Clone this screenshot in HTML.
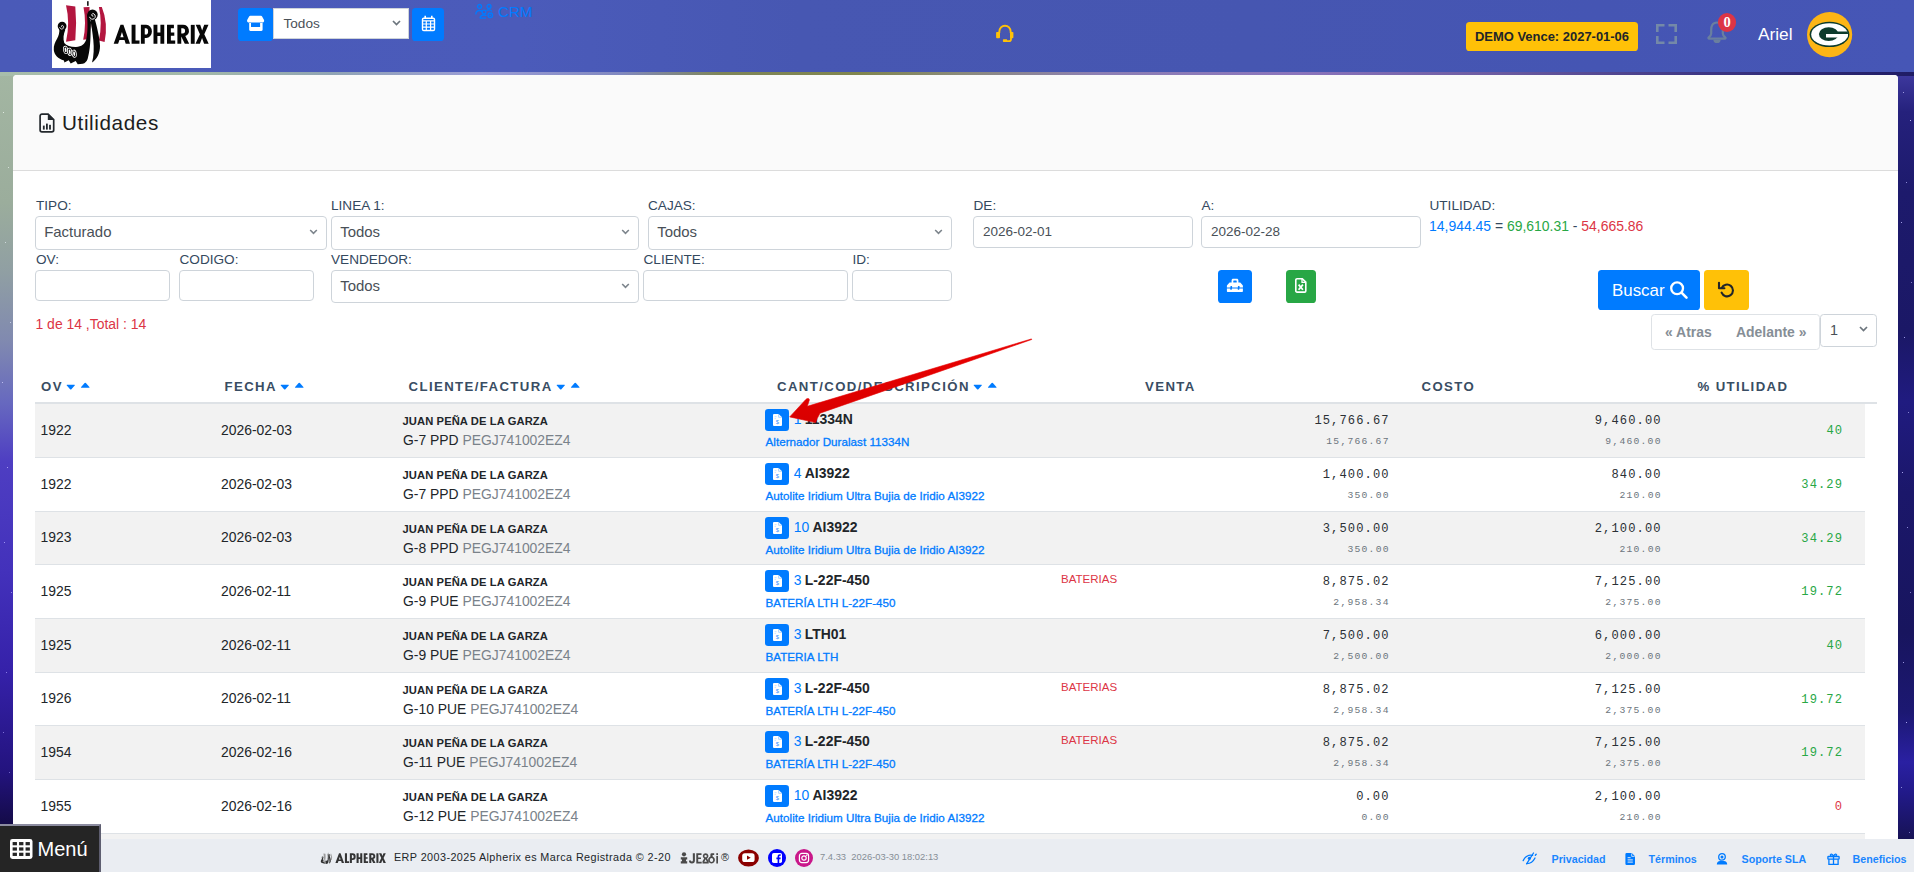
<!DOCTYPE html>
<html lang="es">
<head>
<meta charset="utf-8">
<title>Utilidades</title>
<style>
*{box-sizing:border-box;margin:0;padding:0}
html,body{width:1914px;height:872px;overflow:hidden}
body{font-family:"Liberation Sans",sans-serif;font-size:14.4px;color:#212529;position:relative;
 background:#1a1560;}
.abs{position:absolute}
/* background strips */
#bgL{left:0;top:72px;width:14px;height:800px;background:linear-gradient(180deg,#a3b6a2 0px,#9bad9c 130px,#909fa3 200px,#8089b0 270px,#6769bf 330px,#4e3ec2 390px,#4331bb 500px,#3521a9 600px,#23137e 700px,#140b48 752px)}
#bgR{left:1897px;top:72px;width:17px;height:800px;background:linear-gradient(180deg,#3f3aa0 0px,#25217c 40px,#1d1a6c 120px,#1b1866 260px,#201b80 330px,#1b176a 420px,#18155e 560px,#1c1872 640px,#2a20a2 690px,#221a8a 720px,#161252 770px)}
#bgT{left:0;top:72px;width:1914px;height:4px;background:linear-gradient(90deg,#a8bdab 0,#a2b8a8 200px,#90a4b4 330px,#9a9cd6 480px,#8088c0 620px,#7e8558 720px,#80854e 860px,#8a8a7a 960px,#8c7fb4 1100px,#8a74bc 1300px,#6a5aa0 1500px,#3d3684 1700px,#1f1c64 1914px)}
/* header */
#hdr{left:0;top:0;width:1914px;height:72px;background:linear-gradient(90deg,#4a5ab8 0,#4b5bba 520px,#4757b2 800px,#4656b1 1250px,#4555b3 1600px,#4656b6 1914px)}
#logo{left:52px;top:0;width:159px;height:68px;background:#fff}
.btnb{background:#007bff;border-radius:3.6px;color:#fff}

/* header items */
#stbtn{left:238px;top:8px;width:35px;height:33px;border-radius:3.6px}
#hsel{left:273px;top:8px;width:136px;height:31px;background:#fff;border:1px solid #ced4da;color:#495057;font-size:13.6px;line-height:29px;padding-left:9.5px}
#calbtn{left:412px;top:8px;width:32px;height:33px}
#crm{left:475px;top:1.5px;height:20px;color:#007bff;font-size:15.1px;line-height:20px;white-space:nowrap}
#demo{left:1466px;top:22px;width:172px;height:29px;background:#ffc107;border-radius:3.6px;color:#212529;font-weight:bold;font-size:12.96px;line-height:29px;text-align:center;white-space:nowrap}
#ariel{left:1758px;top:24px;color:#fff;font-size:17.28px;line-height:20px}
#nbadge{left:1718px;top:12.500px;width:18px;height:19px;border-radius:9.500px;background:#dc3545;color:#fff;font-family:"Liberation Serif",serif;font-weight:bold;font-size:14.500px;line-height:19px;text-align:center}
svg{display:block;overflow:visible}

/* title */
#ttl{left:49px;top:35px;font-size:20.7px;line-height:26px;letter-spacing:.6px;color:#1d1d1d;white-space:nowrap}
/* filters: coordinates relative to card (card left=13, top=75) */
.lbl{position:absolute;font-size:13.6px;line-height:16px;color:#34495e;white-space:nowrap}
.fc{position:absolute;background:#fff;border:1px solid #ced4da;border-radius:4px;color:#495057;font-size:14.95px;white-space:nowrap}
.fc.sel{padding-left:8.2px}
.fc.inp{padding-left:9px;font-size:13.5px}
.chev{position:absolute;right:8px;top:11.5px}
.ib{position:absolute;border-radius:3.6px}
#cnt{left:22.5px;top:241px;font-size:13.95px;line-height:16px;color:#dc3545;white-space:nowrap}
#util{left:1416px;top:142px;font-size:13.95px;line-height:18px;white-space:nowrap;color:#34495e}
#pag{left:1638px;top:239px;width:169px;height:36px;border:1px solid #dee2e6;border-radius:3.6px;background:#fff;font-weight:bold;font-size:13.95px;color:#868e96;line-height:34px;white-space:nowrap}
#psel{left:1807px;top:239px;width:57px;height:33px;border:1px solid #ced4da;border-radius:3.6px;background:#fff;color:#495057;font-size:14.4px;line-height:31px;padding-left:9px}

/* table */
#thead{left:22px;top:296px;width:1842px;height:33px;border-bottom:2px solid #dee2e6}
.th{position:absolute;top:7.5px;font-weight:bold;font-size:13.2px;line-height:16px;letter-spacing:1.4px;color:#394d63;white-space:nowrap}
.car{display:inline-block;vertical-align:top;margin-left:3.5px}
.tr{position:absolute;left:22px;width:1830px;border-bottom:1px solid #dee2e6;background:#fff}
.tr.o{background:#f2f2f2}
.tr>*{position:absolute;white-space:nowrap}
.c1,.c2{font-size:13.9px;line-height:18px;color:#212529}
.c1{left:5.5px}.c2{left:186px}
.nm{left:367.5px;top:10px;font-weight:bold;font-size:11.2px;line-height:14px;color:#212529;letter-spacing:.1px}
.fa{left:368px;top:27px;font-size:13.9px;line-height:18px;color:#212529}
.fa i{font-style:normal;color:#7a828a}
.bt{left:730px;top:5px;width:24px;height:22px;background:#007bff;border-radius:3.2px}
.q{left:758.7px;top:6px;word-spacing:-.6px;font-size:13.95px;line-height:18px;color:#007bff}
.q b{color:#212529}
.ds{left:730.5px;top:31px;font-size:11.65px;line-height:14px;color:#007bff;-webkit-text-stroke:.3px #007bff;letter-spacing:.02px}
.ct{left:1026px;top:7px;font-size:11.52px;line-height:14px;color:#dc3545}
.m{font-family:"Liberation Mono",monospace;text-align:right}
.v1,.k1{top:8px;font-size:12.1px;letter-spacing:1.1px;line-height:18px;color:#2b3035;margin-right:-1.1px}
.v2,.k2{top:30.5px;font-size:9.7px;letter-spacing:1.23px;line-height:14px;color:#6c757d;margin-right:-1.23px}
.v1,.v2{right:476.5px}
.k1,.k2{right:204.5px}
.u{right:23px;font-size:12.1px;letter-spacing:1.1px;margin-right:-1.1px;line-height:18px;color:#28a745}
.u.r{color:#dc3545}
/* footer */
#foot{left:0;top:839px;width:1914px;height:33px;background:#eaedf2}
#menu{left:0;top:824px;width:101px;height:48px;background:#252525;border-top:2px solid #8c8ca0;border-right:2px solid #5e5e70;color:#fff;font-size:20px;line-height:46px;padding-left:37.500px}
.ft{position:absolute;top:850px;font-size:10.8px;line-height:14px;white-space:nowrap}
.fl{position:absolute;top:852px;font-weight:bold;font-size:10.7px;line-height:14px;color:#1a86ff;white-space:nowrap;letter-spacing:0}
/* card */
#card{left:13px;top:75px;width:1885px;height:800px;background:#fff;border-radius:4px 4px 0 0;overflow:hidden}
#cardh{left:0;top:0;width:1885px;height:96px;background:#fafafa;border-bottom:1px solid #dcdcdc}
#busc{font-size:16.9px}
.star{position:absolute;width:1px;height:1px;background:transparent}
#stL{left:0;top:72px;box-shadow:3px 40px 0 #dfe8e0,8px 95px 0 #d5dfd8,5px 170px 0 #cfd8dc,10px 250px 0 #c4c9e6,2px 310px 0 #b9b9ee,7px 395px 0 #a59df0,4px 470px 0 #9d92f2,11px 520px 0 #9488ee,6px 600px 0 #8a7de6,3px 660px 0 #7d70d8,9px 700px 0 #6f63c8}
#stR{left:1898px;top:72px;box-shadow:5px 20px 0 #9c98e0,12px 48px 0 #b4b0f0,8px 110px 0 #8b88d4,3px 150px 0 #a09ce6,13px 210px 0 #7f7cc8,6px 265px 0 #9a96e2,10px 340px 0 #8683d0,4px 400px 0 #a4a0ea,9px 455px 0 #8a86d4,12px 520px 0 #7a77c4,5px 590px 0 #9692de,8px 650px 0 #a8a4ee,3px 715px 0 #8e8ad8,11px 760px 0 #7673c0}
</style>
</head>
<body>
<div class="abs" id="bgL"></div>
<div class="abs" id="bgR"></div>
<div class="abs" id="bgT"></div>
<div class="star" id="stL"></div><div class="star" id="stR"></div>
<div class="abs" id="hdr"></div>
<div class="abs" id="logo">
<svg width="159" height="68" viewBox="0 0 159 68" style="color:#b3163f">
 <g id="ship"><g fill="currentColor">
  <path d="M14 5.300L23.300 6.600Q24.900 23 23.300 40.200L14 41.700Q18.300 23 14 5.300Z"/>
  <path d="M31.500 7.200L37.500 6.900L37.500 39L31.200 39.800Q34.700 23 31.500 7.200Z"/>
  <path d="M46.900 7L49.800 6.900Q56.400 23 52.600 42L46.900 40.500Q50.600 23 46.900 7Z"/>
  <path d="M39.600 21.500L41 21.500L40.600 27.500L39.700 27.500Z"/>
 </g>
 <g fill="#070707">
  <rect x="35.100" y="1.200" width="1.500" height="4.600"/>
  <circle cx="10.100" cy="26.100" r="4.400"/>
  <path d="M7.300 29.300C7.600 32.500 6.800 35.500 5.200 38.500C3 42.500 1.500 45.500 1.800 50C2.300 55.200 6 58.600 12 60.400L12.400 62.500L16.700 60.300L18.700 63.500L23.700 61.100L25.700 64.300L30.700 63.800C33 63.300 34.800 61.300 35.600 59C37.600 52 38.400 44 38.600 33L39 22L34.800 13C35.900 24 35.700 32 34.400 38.800C33 44.300 29.500 46.700 24 46.900C19 47 14.500 46 12.300 43C10.900 39 11.400 34.500 13.300 29.800Z"/>
  <circle cx="40.500" cy="14.800" r="5.200"/>
  <path d="M38.200 18.600L42.800 19.200C45 27 47.700 38 48 46C48.100 53 45 59.200 40 62.600C41.900 56 42.100 48 41.300 40C40.700 34 39.800 28 38.200 18.600Z"/>
 </g>
 <g fill="none" stroke="#fff" stroke-linecap="round">
  <path d="M40.900 16.200a1.300 1.300 0 1 1 1-2.300a2.900 2.900 0 1 1-4.300 3.300" stroke-width=".95"/>
  <path d="M10 27.100a.9.900 0 1 1 .8-1.600a2 2 0 1 1-3.100 2" stroke-width=".8"/>
 </g>
 <g>
  <g transform="rotate(-9 13.600 49.900)"><ellipse cx="13.600" cy="49.900" rx="2.500" ry="4.100" fill="#fff"/><ellipse cx="13.600" cy="49.900" rx="1.750" ry="3.300" fill="#070707"/><ellipse cx="13.600" cy="49.900" rx=".95" ry="2.400" fill="#fff"/></g>
  <g transform="rotate(-9 17.700 51.800)"><ellipse cx="17.700" cy="51.800" rx="2.500" ry="4.100" fill="#fff"/><ellipse cx="17.700" cy="51.800" rx="1.750" ry="3.300" fill="#070707"/><ellipse cx="17.700" cy="51.800" rx=".95" ry="2.400" fill="#fff"/></g>
  <g transform="rotate(-9 22.200 53.700)"><ellipse cx="22.200" cy="53.700" rx="2.500" ry="4.100" fill="#fff"/><ellipse cx="22.200" cy="53.700" rx="1.750" ry="3.300" fill="#070707"/><ellipse cx="22.200" cy="53.700" rx=".95" ry="2.400" fill="#fff"/></g>
 </g>
 </g>
 <g id="ltr" fill="#070707">
  <path fill-rule="evenodd" d="M61.700 43.800L68.500 24.860H71.400L78 43.800H73.700L72.500 40H67.400L66.100 43.800ZM68.300 37.200H71.600L69.950 32Z"/>
  <path d="M79.600 24.860H83.500V40.500H87.500V43.800H79.600Z"/>
  <path fill-rule="evenodd" d="M88.900 24.860H94.200A5.700 6.570 0 0 1 94.200 38H92.750V43.800H88.900ZM92.750 28.300V34.600H93.800A2.300 3.150 0 0 0 93.800 28.300Z"/>
  <path d="M101.500 24.860H105.400V32.400H108.400V24.860H112.250V43.800H108.400V35.900H105.400V43.800H101.500Z"/>
  <path d="M115 24.860H121.900V28.150H118.850V32.400H122.300V35.700H118.850V40.500H123.200V43.800H115Z"/>
  <path fill-rule="evenodd" d="M125.400 24.860H131A5.900 5.850 0 0 1 133.300 36.100L137.200 43.800H132.800L129.250 36.600V43.800H125.400ZM129.250 28.200V33.400H130.700A2.400 2.600 0 0 0 130.700 28.200Z"/>
  <path d="M138.800 24.860H142.700V43.800H138.800Z"/>
  <path d="M143.700 24.860H148.200L150.150 30.400L152.200 24.860H156.500L152.300 34.200L156.700 43.800H152.100L150.050 38L147.900 43.800H143.500L147.900 34.200Z"/>
 </g>
</svg>
</div>
<div class="abs btnb" id="stbtn">
<svg width="35" height="33" viewBox="0 0 35 33"><path fill="#fff" d="M12.300 7.800h10.700c.5 0 .8.200 1.100.6l1.800 3.300c.7 1.400-.2 2.800-1.600 2.800H10.900c-1.400 0-2.300-1.400-1.600-2.800l1.800-3.300c.3-.4.600-.6 1.200-.6ZM11.200 14.900h1.800v4h9.100v-4h2.500v6.800c0 .7-.5 1.200-1.200 1.200H12.400c-.7 0-1.200-.5-1.200-1.200Z"/></svg>
</div>
<div class="abs" id="hsel">Todos
<svg class="abs" style="left:118px;top:11px" width="9" height="6" viewBox="0 0 9 6"><path d="M1 1l3.500 3.500L8 1" fill="none" stroke="#6c757d" stroke-width="1.700"/></svg>
</div>
<div class="abs btnb" id="calbtn">
<svg width="32" height="33" viewBox="0 0 32 33"><g fill="none" stroke="#fff"><rect x="10.500" y="10.200" width="12" height="12.300" rx="1.300" stroke-width="1.400"/><path d="M10.500 12.900h12M10.500 16h12M10.500 19.200h12M14.300 12.900v9.600M18.600 12.900v9.600" stroke-width="1.200"/><path d="M13.200 7.800v2.600M19.800 7.800v2.600" stroke-width="1.600"/></g></svg>
</div>
<div class="abs" id="crm">
<svg class="abs" style="left:0;top:1px" width="20" height="16" viewBox="0 0 20 16"><g fill="none" stroke="#007bff" stroke-width="1.300"><circle cx="4.500" cy="3.500" r="2"/><circle cx="14" cy="3.500" r="2"/><path d="M.8 11.500Q1 7.500 4.500 7.500Q7 7.500 7.800 9.500"/><circle cx="9" cy="9" r="1.900"/><path d="M5 15.200Q5.300 12 9 12Q10.500 12 11.500 12.800M5 15.200h6"/><circle cx="15.300" cy="12.300" r="2.300"/><path d="M11.500 7.600Q12.500 6.800 14 6.900Q16 7 17 8.500"/></g><circle cx="15.300" cy="12.300" r="0.900" fill="#007bff"/></svg>
<span style="margin-left:23px">CRM</span></div>
<svg class="abs" style="left:995px;top:23px" width="20" height="21" viewBox="0 0 20 21"><path d="M4.300 10V8.700a5.700 6 0 0 1 11.400 0V10" fill="none" stroke="#ffc107" stroke-width="1.900"/><path d="M16 14.500v1.700q0 1.900-1.900 1.900H10" fill="none" stroke="#ffc107" stroke-width="1.800"/><rect x="1.100" y="8.900" width="3.900" height="6.300" rx=".9" fill="#ffc107"/><rect x="15" y="8.900" width="3.400" height="6.300" rx=".9" fill="#ffc107"/><rect x="7.900" y="16.200" width="4.300" height="2.800" rx=".7" fill="#ffc107"/></svg>
<div class="abs" id="demo">DEMO Vence: 2027-01-06</div>
<svg class="abs" style="left:1656px;top:24px" width="21" height="20" viewBox="0 0 21 20"><path d="M1.300 8V1.300h7.200M12.500 1.300h7.200V8M19.700 12v6.700h-7.200M8.500 18.700H1.300V12" fill="none" stroke="#7489a8" stroke-width="2.600"/></svg>
<svg class="abs" style="left:1707px;top:21px" width="20" height="22" viewBox="0 0 20 22"><path d="M10 1.500C5.400 1.500 4.200 5.300 4.200 8.700V12.600c0 2-1.200 3-2.500 3.900c-.6.400-.3 1.200.4 1.200H17.900c.7 0 1-.8.400-1.200c-1.300-.9-2.500-1.900-2.500-3.900V8.700C15.800 5.300 14.600 1.500 10 1.500Z" fill="none" stroke="#6a7f9f" stroke-width="2.200"/><path d="M6.400 18.700a3.600 3.400 0 0 0 7.200 0z" fill="#6a7f9f"/></svg>
<div class="abs" id="nbadge">0</div>
<div class="abs" id="ariel">Ariel</div>
<svg class="abs" style="left:1807px;top:12px" width="45" height="45" viewBox="0 0 45 45"><circle cx="22.600" cy="22.600" r="22.600" fill="#fdb515"/><ellipse cx="22.500" cy="22.400" rx="19.900" ry="12.700" fill="#0d3b2c"/><ellipse cx="22.500" cy="22.400" rx="18.300" ry="11.200" fill="#fff"/><ellipse cx="21.700" cy="22.100" rx="9.800" ry="6.900" fill="#0d3b2c"/><path d="M29 19.400H40.600Q41 20.600 41 21.900H29Z" fill="#0d3b2c"/><path d="M19 21.900H41Q41.100 23.800 40.400 25.500H19Z" fill="#fff"/></svg>
<div class="abs" id="card">
 <div class="abs" id="cardh"></div>
<svg class="abs" style="left:26px;top:38px" width="16" height="20" viewBox="0 0 16 20"><path d="M3 1.100h6.100l5.600 5.500V17a1.900 1.900 0 0 1-1.900 1.900H3A1.900 1.900 0 0 1 1.100 17V3A1.900 1.900 0 0 1 3 1.100Z" fill="none" stroke="#23282d" stroke-width="1.700"/><path d="M8.800 1.100v6h6L8.800 1.100Z" fill="#23282d"/><rect x="3.900" y="12.600" width="1.800" height="4" fill="#23282d"/><rect x="7" y="10.600" width="1.800" height="6" fill="#23282d"/><rect x="10.100" y="11.800" width="1.800" height="4.800" fill="#23282d"/></svg>
<div class="abs" id="ttl">Utilidades</div>
<div class="lbl" style="left:23px;top:123px">TIPO:</div>
<div class="fc sel" style="left:22px;top:141px;width:292px;height:34px;line-height:30.6px">Facturado<svg class="chev" width="9" height="6" viewBox="0 0 9 6"><path d="M1.200 1l3.300 3.300L7.800 1" fill="none" stroke="#7d858c" stroke-width="1.600"/></svg></div>
<div class="lbl" style="left:318px;top:123px">LINEA 1:</div>
<div class="fc sel" style="left:318px;top:141px;width:308px;height:34px;line-height:30.6px">Todos<svg class="chev" width="9" height="6" viewBox="0 0 9 6"><path d="M1.200 1l3.300 3.300L7.800 1" fill="none" stroke="#7d858c" stroke-width="1.600"/></svg></div>
<div class="lbl" style="left:635px;top:123px">CAJAS:</div>
<div class="fc sel" style="left:635px;top:141px;width:304px;height:34px;line-height:30.6px">Todos<svg class="chev" width="9" height="6" viewBox="0 0 9 6"><path d="M1.200 1l3.300 3.300L7.800 1" fill="none" stroke="#7d858c" stroke-width="1.600"/></svg></div>
<div class="lbl" style="left:960.5px;top:123px">DE:</div>
<div class="fc inp" style="left:960px;top:141px;width:220px;height:32px;line-height:30px">2026-02-01</div>
<div class="lbl" style="left:1188.5px;top:123px">A:</div>
<div class="fc inp" style="left:1188px;top:141px;width:220px;height:32px;line-height:30px">2026-02-28</div>
<div class="lbl" style="left:1416.5px;top:123px">UTILIDAD:</div>
<div class="abs" id="util"><span style="color:#007bff">14,944.45</span> = <span style="color:#28a745">69,610.31</span> - <span style="color:#dc3545">54,665.86</span></div>
<div class="lbl" style="left:23px;top:176.5px">OV:</div>
<div class="fc inp" style="left:22px;top:195px;width:135px;height:31px;line-height:29px"></div>
<div class="lbl" style="left:166.5px;top:176.5px">CODIGO:</div>
<div class="fc inp" style="left:166px;top:195px;width:135px;height:31px;line-height:29px"></div>
<div class="lbl" style="left:318px;top:176.5px">VENDEDOR:</div>
<div class="fc sel" style="left:318px;top:195px;width:308px;height:33px;line-height:29.6px">Todos<svg class="chev" width="9" height="6" viewBox="0 0 9 6"><path d="M1.200 1l3.300 3.300L7.800 1" fill="none" stroke="#7d858c" stroke-width="1.600"/></svg></div>
<div class="lbl" style="left:630.5px;top:176.5px">CLIENTE:</div>
<div class="fc inp" style="left:630px;top:195px;width:205px;height:31px;line-height:29px"></div>
<div class="lbl" style="left:839.5px;top:176.5px">ID:</div>
<div class="fc inp" style="left:839px;top:195px;width:100px;height:31px;line-height:29px"></div>
<div class="ib" style="left:1205px;top:195px;width:34px;height:33px;background:#007bff">
<svg width="34" height="33" viewBox="0 0 34 33"><path fill="#fff" fill-rule="evenodd" d="M13.600 12.600v-2.200c0-.9.700-1.600 1.600-1.600h3.600c.9 0 1.600.7 1.600 1.600v2.200h1.300c.4 0 .7.100 1 .4l1.800 2c.3.300.4.600.4 1v1.400h-3.300v-.9c0-.3-.2-.5-.5-.5h-.7c-.3 0-.5.200-.5.500v.9h-5.800v-.9c0-.3-.2-.5-.5-.5h-.7c-.3 0-.5.200-.5.500v.9H8.900V16c0-.4.100-.7.400-1l1.800-2c.3-.3.600-.4 1-.4zm1.700 0h3.400v-1.600c0-.3-.2-.5-.5-.5h-2.400c-.3 0-.5.200-.5.500zM8.900 18.400h3.300v.8c0 .3.200.5.500.5h.7c.3 0 .5-.2.500-.5v-.8h5.800v.8c0 .3.200.5.500.5h.7c.3 0 .5-.2.500-.5v-.8h3.500v2.600c0 .6-.4 1-1 1H9.900c-.6 0-1-.4-1-1z"/></svg></div>
<div class="ib" style="left:1273px;top:195px;width:30px;height:33px;background:#28a745">
<svg width="30" height="33" viewBox="0 0 30 33"><path d="M11 8.700h5.300l3.500 3.400v8.800a1.200 1.200 0 0 1-1.200 1.200H11a1.200 1.200 0 0 1-1.200-1.200V9.900A1.200 1.200 0 0 1 11 8.700Z" fill="none" stroke="#fff" stroke-width="1.600"/><path d="M16 8.700v3.700h3.700" fill="none" stroke="#fff" stroke-width="1.300"/><path d="M12.600 14.600l4.300 5.200M16.900 14.600l-4.300 5.200" stroke="#fff" stroke-width="1.700"/></svg></div>
<div class="ib" id="busc" style="left:1585px;top:195px;width:102px;height:40px;background:#007bff;color:#fff;line-height:42px;padding-left:14px">Buscar
<svg class="abs" style="left:71.500px;top:10.500px" width="18" height="18" viewBox="0 0 18 18"><circle cx="7.100" cy="7.300" r="5.900" fill="none" stroke="#fff" stroke-width="2.300"/><path d="M11.500 11.700l5 5" stroke="#fff" stroke-width="2.600" stroke-linecap="round"/></svg></div>
<div class="ib" style="left:1691px;top:195px;width:45px;height:40px;background:#ffc107">
<svg width="45" height="40" viewBox="0 0 45 40"><path d="M17.700 18A5.900 5.900 0 1 1 17.600 22.700" fill="none" stroke="#212529" stroke-width="2.100" stroke-linecap="round"/><path d="M15 12.800v5.400h5.400" fill="none" stroke="#212529" stroke-width="2.100" stroke-linecap="round" stroke-linejoin="round"/></svg></div>
<div class="abs" id="cnt">1 de 14 ,Total : 14</div>
<div class="abs" id="pag"><span style="position:absolute;left:13px">« Atras</span><span style="position:absolute;left:84px">Adelante »</span></div>
<div class="abs" id="psel">1<svg class="chev" style="top:11px" width="9" height="6" viewBox="0 0 9 6"><path d="M1 1l3.500 3.500L8 1" fill="none" stroke="#6c757d" stroke-width="1.700"/></svg></div>
<div class="abs" id="thead"><div class="th" style="left:6px">OV<svg class="car" width="25" height="16" viewBox="0 0 25 16"><path d="M1.100 5.700h7.300q.9 0 .3.700l-3.300 3.800q-.65.700-1.300 0L.8 6.400q-.6-.7.3-.7Z" fill="#007bff"/><path d="M15.400 8.700h7.700q.9 0 .3-.7l-3.500-4q-.65-.7-1.300 0l-3.500 4q-.6.700.3.700Z" fill="#007bff"/></svg></div><div class="th" style="left:189.5px">FECHA<svg class="car" width="25" height="16" viewBox="0 0 25 16"><path d="M1.100 5.700h7.300q.9 0 .3.700l-3.300 3.800q-.65.700-1.300 0L.8 6.400q-.6-.7.3-.7Z" fill="#007bff"/><path d="M15.400 8.700h7.700q.9 0 .3-.7l-3.500-4q-.65-.7-1.300 0l-3.500 4q-.6.700.3.700Z" fill="#007bff"/></svg></div><div class="th" style="left:373.5px">CLIENTE/FACTURA<svg class="car" width="25" height="16" viewBox="0 0 25 16"><path d="M1.100 5.700h7.300q.9 0 .3.700l-3.300 3.800q-.65.700-1.300 0L.8 6.400q-.6-.7.3-.7Z" fill="#007bff"/><path d="M15.400 8.700h7.700q.9 0 .3-.7l-3.500-4q-.65-.7-1.300 0l-3.500 4q-.6.700.3.700Z" fill="#007bff"/></svg></div><div class="th" style="left:742px">CANT/COD/DESCRIPCIÓN<svg class="car" width="25" height="16" viewBox="0 0 25 16"><path d="M1.100 5.700h7.300q.9 0 .3.700l-3.300 3.800q-.65.700-1.300 0L.8 6.400q-.6-.7.3-.7Z" fill="#007bff"/><path d="M15.400 8.700h7.700q.9 0 .3-.7l-3.500-4q-.65-.7-1.300 0l-3.500 4q-.6.700.3.700Z" fill="#007bff"/></svg></div><div class="th" style="left:1110px">VENTA</div><div class="th" style="left:1386.5px">COSTO</div><div class="th" style="left:1662.5px">% UTILIDAD</div></div>
<div class="tr o" style="top:329px;height:54px"><span class="c1" style="top:16.5px">1922</span><span class="c2" style="top:16.5px">2026-02-03</span><span class="nm">JUAN PEÑA DE LA GARZA</span><span class="fa">G-7 PPD <i>PEGJ741002EZ4</i></span><span class="bt"><svg style="margin:5px 0 0 7.5px" width="9" height="12" viewBox="0 0 9 12"><path d="M1 0h4.600L9 3.300V11a1 1 0 0 1-1 1H1a1 1 0 0 1-1-1V1a1 1 0 0 1 1-1Z" fill="#fff"/><path d="M5.600 0v3.300H9" fill="none" stroke="#9ccbff" stroke-width=".8"/><text x="4.500" y="10.300" font-size="5.900" font-family="Liberation Sans, sans-serif" fill="#3d95ff" text-anchor="middle">$</text><path d="M1.600 2.600h2M1.600 4.400h1.400" stroke="#b9dbff" stroke-width=".7"/></svg></span><span class="q">1 <b>11334N</b></span><span class="ds">Alternador Duralast 11334N</span><span class="m v1">15,766.67</span><span class="m v2">15,766.67</span><span class="m k1">9,460.00</span><span class="m k2">9,460.00</span><span class="m u" style="top:18.0px">40</span></div>
<div class="tr" style="top:383px;height:54px"><span class="c1" style="top:16.5px">1922</span><span class="c2" style="top:16.5px">2026-02-03</span><span class="nm">JUAN PEÑA DE LA GARZA</span><span class="fa">G-7 PPD <i>PEGJ741002EZ4</i></span><span class="bt"><svg style="margin:5px 0 0 7.5px" width="9" height="12" viewBox="0 0 9 12"><path d="M1 0h4.600L9 3.300V11a1 1 0 0 1-1 1H1a1 1 0 0 1-1-1V1a1 1 0 0 1 1-1Z" fill="#fff"/><path d="M5.600 0v3.300H9" fill="none" stroke="#9ccbff" stroke-width=".8"/><text x="4.500" y="10.300" font-size="5.900" font-family="Liberation Sans, sans-serif" fill="#3d95ff" text-anchor="middle">$</text><path d="M1.600 2.600h2M1.600 4.400h1.400" stroke="#b9dbff" stroke-width=".7"/></svg></span><span class="q">4 <b>AI3922</b></span><span class="ds">Autolite Iridium Ultra Bujia de Iridio AI3922</span><span class="m v1">1,400.00</span><span class="m v2">350.00</span><span class="m k1">840.00</span><span class="m k2">210.00</span><span class="m u" style="top:18.0px">34.29</span></div>
<div class="tr o" style="top:437px;height:53px"><span class="c1" style="top:16.0px">1923</span><span class="c2" style="top:16.0px">2026-02-03</span><span class="nm">JUAN PEÑA DE LA GARZA</span><span class="fa">G-8 PPD <i>PEGJ741002EZ4</i></span><span class="bt"><svg style="margin:5px 0 0 7.5px" width="9" height="12" viewBox="0 0 9 12"><path d="M1 0h4.600L9 3.300V11a1 1 0 0 1-1 1H1a1 1 0 0 1-1-1V1a1 1 0 0 1 1-1Z" fill="#fff"/><path d="M5.600 0v3.300H9" fill="none" stroke="#9ccbff" stroke-width=".8"/><text x="4.500" y="10.300" font-size="5.900" font-family="Liberation Sans, sans-serif" fill="#3d95ff" text-anchor="middle">$</text><path d="M1.600 2.600h2M1.600 4.400h1.400" stroke="#b9dbff" stroke-width=".7"/></svg></span><span class="q">10 <b>AI3922</b></span><span class="ds">Autolite Iridium Ultra Bujia de Iridio AI3922</span><span class="m v1">3,500.00</span><span class="m v2">350.00</span><span class="m k1">2,100.00</span><span class="m k2">210.00</span><span class="m u" style="top:17.5px">34.29</span></div>
<div class="tr" style="top:490px;height:54px"><span class="c1" style="top:16.5px">1925</span><span class="c2" style="top:16.5px">2026-02-11</span><span class="nm">JUAN PEÑA DE LA GARZA</span><span class="fa">G-9 PUE <i>PEGJ741002EZ4</i></span><span class="bt"><svg style="margin:5px 0 0 7.5px" width="9" height="12" viewBox="0 0 9 12"><path d="M1 0h4.600L9 3.300V11a1 1 0 0 1-1 1H1a1 1 0 0 1-1-1V1a1 1 0 0 1 1-1Z" fill="#fff"/><path d="M5.600 0v3.300H9" fill="none" stroke="#9ccbff" stroke-width=".8"/><text x="4.500" y="10.300" font-size="5.900" font-family="Liberation Sans, sans-serif" fill="#3d95ff" text-anchor="middle">$</text><path d="M1.600 2.600h2M1.600 4.400h1.400" stroke="#b9dbff" stroke-width=".7"/></svg></span><span class="q">3 <b>L-22F-450</b></span><span class="ds">BATERÍA LTH L-22F-450</span><span class="ct">BATERIAS</span><span class="m v1">8,875.02</span><span class="m v2">2,958.34</span><span class="m k1">7,125.00</span><span class="m k2">2,375.00</span><span class="m u" style="top:18.0px">19.72</span></div>
<div class="tr o" style="top:544px;height:54px"><span class="c1" style="top:16.5px">1925</span><span class="c2" style="top:16.5px">2026-02-11</span><span class="nm">JUAN PEÑA DE LA GARZA</span><span class="fa">G-9 PUE <i>PEGJ741002EZ4</i></span><span class="bt"><svg style="margin:5px 0 0 7.5px" width="9" height="12" viewBox="0 0 9 12"><path d="M1 0h4.600L9 3.300V11a1 1 0 0 1-1 1H1a1 1 0 0 1-1-1V1a1 1 0 0 1 1-1Z" fill="#fff"/><path d="M5.600 0v3.300H9" fill="none" stroke="#9ccbff" stroke-width=".8"/><text x="4.500" y="10.300" font-size="5.900" font-family="Liberation Sans, sans-serif" fill="#3d95ff" text-anchor="middle">$</text><path d="M1.600 2.600h2M1.600 4.400h1.400" stroke="#b9dbff" stroke-width=".7"/></svg></span><span class="q">3 <b>LTH01</b></span><span class="ds">BATERIA LTH</span><span class="m v1">7,500.00</span><span class="m v2">2,500.00</span><span class="m k1">6,000.00</span><span class="m k2">2,000.00</span><span class="m u" style="top:18.0px">40</span></div>
<div class="tr" style="top:598px;height:53px"><span class="c1" style="top:16.0px">1926</span><span class="c2" style="top:16.0px">2026-02-11</span><span class="nm">JUAN PEÑA DE LA GARZA</span><span class="fa">G-10 PUE <i>PEGJ741002EZ4</i></span><span class="bt"><svg style="margin:5px 0 0 7.5px" width="9" height="12" viewBox="0 0 9 12"><path d="M1 0h4.600L9 3.300V11a1 1 0 0 1-1 1H1a1 1 0 0 1-1-1V1a1 1 0 0 1 1-1Z" fill="#fff"/><path d="M5.600 0v3.300H9" fill="none" stroke="#9ccbff" stroke-width=".8"/><text x="4.500" y="10.300" font-size="5.900" font-family="Liberation Sans, sans-serif" fill="#3d95ff" text-anchor="middle">$</text><path d="M1.600 2.600h2M1.600 4.400h1.400" stroke="#b9dbff" stroke-width=".7"/></svg></span><span class="q">3 <b>L-22F-450</b></span><span class="ds">BATERÍA LTH L-22F-450</span><span class="ct">BATERIAS</span><span class="m v1">8,875.02</span><span class="m v2">2,958.34</span><span class="m k1">7,125.00</span><span class="m k2">2,375.00</span><span class="m u" style="top:17.5px">19.72</span></div>
<div class="tr o" style="top:651px;height:54px"><span class="c1" style="top:16.5px">1954</span><span class="c2" style="top:16.5px">2026-02-16</span><span class="nm">JUAN PEÑA DE LA GARZA</span><span class="fa">G-11 PUE <i>PEGJ741002EZ4</i></span><span class="bt"><svg style="margin:5px 0 0 7.5px" width="9" height="12" viewBox="0 0 9 12"><path d="M1 0h4.600L9 3.300V11a1 1 0 0 1-1 1H1a1 1 0 0 1-1-1V1a1 1 0 0 1 1-1Z" fill="#fff"/><path d="M5.600 0v3.300H9" fill="none" stroke="#9ccbff" stroke-width=".8"/><text x="4.500" y="10.300" font-size="5.900" font-family="Liberation Sans, sans-serif" fill="#3d95ff" text-anchor="middle">$</text><path d="M1.600 2.600h2M1.600 4.400h1.400" stroke="#b9dbff" stroke-width=".7"/></svg></span><span class="q">3 <b>L-22F-450</b></span><span class="ds">BATERÍA LTH L-22F-450</span><span class="ct">BATERIAS</span><span class="m v1">8,875.02</span><span class="m v2">2,958.34</span><span class="m k1">7,125.00</span><span class="m k2">2,375.00</span><span class="m u" style="top:18.0px">19.72</span></div>
<div class="tr" style="top:705px;height:54px"><span class="c1" style="top:16.5px">1955</span><span class="c2" style="top:16.5px">2026-02-16</span><span class="nm">JUAN PEÑA DE LA GARZA</span><span class="fa">G-12 PUE <i>PEGJ741002EZ4</i></span><span class="bt"><svg style="margin:5px 0 0 7.5px" width="9" height="12" viewBox="0 0 9 12"><path d="M1 0h4.600L9 3.300V11a1 1 0 0 1-1 1H1a1 1 0 0 1-1-1V1a1 1 0 0 1 1-1Z" fill="#fff"/><path d="M5.600 0v3.300H9" fill="none" stroke="#9ccbff" stroke-width=".8"/><text x="4.500" y="10.300" font-size="5.900" font-family="Liberation Sans, sans-serif" fill="#3d95ff" text-anchor="middle">$</text><path d="M1.600 2.600h2M1.600 4.400h1.400" stroke="#b9dbff" stroke-width=".7"/></svg></span><span class="q">10 <b>AI3922</b></span><span class="ds">Autolite Iridium Ultra Bujia de Iridio AI3922</span><span class="m v1">0.00</span><span class="m v2">0.00</span><span class="m k1">2,100.00</span><span class="m k2">210.00</span><span class="m u r" style="top:18.0px">0</span></div>
<div class="tr o" style="top:759px;height:40px"></div>
</div>
<svg class="abs" style="left:780px;top:330px" width="260" height="100" viewBox="780 330 260 100"><defs><linearGradient id="ag" x1="0" y1="0" x2="0.3" y2="1"><stop offset="0" stop-color="#f20000"/><stop offset="1" stop-color="#d60000"/></linearGradient></defs><path d="M1031.500 338.900L807.300 406.300L809.300 400.300Q809.600 398.400 807.700 398.500Q806.800 398.500 805.800 399.500L789.700 416.900L815.700 422.600L817.300 418.300L820 413.200L1031.700 339.500Z" fill="url(#ag)" stroke="#e40000" stroke-width=".6" stroke-linejoin="round"/></svg>
<div class="abs" id="foot"></div>
<div class="abs" id="menu">Menú
<svg class="abs" style="left:9.500px;top:12.500px" width="22.500" height="20" viewBox="0 0 24 21" preserveAspectRatio="none"><rect x="0" y="0" width="24" height="21" rx="2.600" fill="#fff"/><g fill="#252525"><rect x="2.800" y="3.200" width="4.600" height="3.400"/><rect x="9.700" y="3.200" width="4.600" height="3.400"/><rect x="16.600" y="3.200" width="4.600" height="3.400"/><rect x="2.800" y="8.800" width="4.600" height="3.400"/><rect x="9.700" y="8.800" width="4.600" height="3.400"/><rect x="16.600" y="8.800" width="4.600" height="3.400"/><rect x="2.800" y="14.400" width="4.600" height="3.400"/><rect x="9.700" y="14.400" width="4.600" height="3.400"/><rect x="16.600" y="14.400" width="4.600" height="3.400"/></g></svg></div>
<svg class="abs" style="left:318px;top:850px;color:#8a8a8a" width="72" height="16" viewBox="318 850 72 16"><g transform="translate(320.400 852.600) scale(.2165 .176)" opacity=".82"><use href="#ship"/></g><g transform="translate(302.600 840.700) scale(.5316 .507)" opacity=".8"><use href="#ltr"/></g></svg>
<div class="ft" style="left:394px;color:#212529;letter-spacing:.42px">ERP 2003-2025 Alpherix es Marca Registrada © 2-20</div>
<svg class="abs" style="left:680px;top:851px" width="40" height="14" viewBox="0 0 40 14"><g fill="#4a4a4a"><circle cx="4" cy="3.300" r="2.100"/><path d="M.8 6.200h6.400v2.200H6v1.800h1.200v2.200H.8v-2.200H2V8.400H.8Z"/><path d="M12.800 2.200h2.100v7.300a3 3 0 0 1-6 0h2a1 1 0 0 0 2 0Z"/><path d="M16.300 2.200h5.200v1.800h-3.300v2.400h2.800v1.700h-2.800v2.600h3.500v1.800h-5.400Z"/><path fill-rule="evenodd" d="M25.600 2.200a2.900 2.900 0 0 1 1.400 5.400l1.700 2.600v2.300h-6.200v-2.300l1.700-2.600a2.900 2.900 0 0 1 1.400-5.400Zm0 1.700a1.200 1.200 0 1 0 .01 0Zm0 4.400-1.300 2.400h2.600Z"/><path fill-rule="evenodd" d="M31.800 2.200h2.400v1.800h-1.600v1.400a3.400 3.600 0 1 1-2.200 0V3.600a1.400 1.400 0 0 1 1.400-1.400Zm-.3 4.900a1.700 1.900 0 1 0 .01 0Z"/><rect x="36.300" y="2.200" width="1.700" height="1.900"/><rect x="36.300" y="5" width="1.700" height="7.500"/></g></svg>
<div class="ft" style="left:721px;top:849.500px;color:#212529;font-size:10.8px">®</div>
<svg class="abs" style="left:738px;top:848.500px" width="21" height="18" viewBox="0 0 21 18"><ellipse cx="10.500" cy="9" rx="10.400" ry="8.600" fill="#8b0000"/><rect x="4.200" y="4.300" width="12.400" height="8.700" rx="2.600" fill="#fff"/><path d="M9 6.500v4.300l3.700-2.150Z" fill="#8b0000"/></svg>
<svg class="abs" style="left:768px;top:848.500px" width="18" height="18" viewBox="0 0 18 18"><circle cx="9" cy="9" r="9" fill="#0000fe"/><rect x="4" y="4" width="10" height="10" rx="1.800" fill="#fff"/><path d="M9.600 14V10.200H8.400V8.600h1.200V7.500c0-1.500.9-2.200 2.100-2.200.5 0 .9 0 1.100.1v1.400h-.8c-.6 0-.8.300-.8.800v1h1.500l-.2 1.600h-1.300V14Z" fill="#0000fe"/></svg>
<svg class="abs" style="left:795px;top:848.500px" width="18" height="18" viewBox="0 0 18 18"><circle cx="9" cy="9" r="9" fill="#c9178a"/><rect x="4.400" y="4.400" width="9.200" height="9.200" rx="2.500" fill="none" stroke="#fff" stroke-width="1.200"/><circle cx="9" cy="9" r="2.200" fill="none" stroke="#fff" stroke-width="1.200"/><circle cx="11.700" cy="6.300" r=".7" fill="#fff"/></svg>
<div class="ft" style="left:820px;top:850.200px;font-size:9.400px;color:#868e96">7.4.33&nbsp; 2026-03-30 18:02:13</div>
<svg class="abs" style="left:1522px;top:852px" width="16" height="13" viewBox="0 0 16 13"><g fill="none" stroke="#007bff" stroke-width="1.300" stroke-linecap="round"><path d="M1.200 8.600Q4.500 2.200 10.600 3.400"/><path d="M4.800 11.600Q10.200 11.600 13 6"/><path d="M11.500 1L4.600 11.800"/><path d="M13.300 3.200l.9-1"/><circle cx="7.400" cy="6.300" r="1.600" fill="#007bff" stroke="none"/></g></svg>
<div class="fl" style="left:1551.500px">Privacidad</div>
<svg class="abs" style="left:1625px;top:852.500px" width="11" height="12" viewBox="0 0 11 12"><path d="M1.600 0h5.200L10 3.200V10.800a1.200 1.200 0 0 1-1.200 1.200H1.600A1.200 1.200 0 0 1 .4 10.800V1.200A1.200 1.200 0 0 1 1.600 0Z" fill="#007bff"/><path d="M2.600 4.700h3M2.600 6.900h5.200M2.600 9.100h5.200" stroke="#eaedf2" stroke-width="1"/><path d="M6.700.4v3h3" fill="none" stroke="#eaedf2" stroke-width=".8"/></svg>
<div class="fl" style="left:1648.500px">Términos</div>
<svg class="abs" style="left:1716px;top:852.500px" width="12" height="12" viewBox="0 0 12 12"><circle cx="6" cy="3.900" r="3.300" fill="none" stroke="#007bff" stroke-width="1.300"/><circle cx="6" cy="4" r="1.500" fill="#007bff"/><path d="M.8 11.600Q1 7.900 4 7.900h4q3 0 3.200 3.700Z" fill="#007bff"/></svg>
<div class="fl" style="left:1741.500px">Soporte SLA</div>
<svg class="abs" style="left:1827px;top:852.500px" width="13" height="12" viewBox="0 0 13 12"><g fill="none" stroke="#007bff" stroke-width="1.300"><rect x=".9" y="3.500" width="11.200" height="2.700" rx=".5"/><path d="M1.900 6.200v5.100h9.200V6.200M6.500 3.500v7.800"/><path d="M6.500 3.300C5.500.6 3.100.6 3.300 2.200 3.500 3.400 5 3.400 6.500 3.300ZM6.500 3.300C7.500.6 9.900.6 9.700 2.200 9.500 3.400 8 3.400 6.500 3.300Z" stroke-width="1.100"/></g></svg>
<div class="fl" style="left:1852.500px">Beneficios</div>
</body>
</html>
